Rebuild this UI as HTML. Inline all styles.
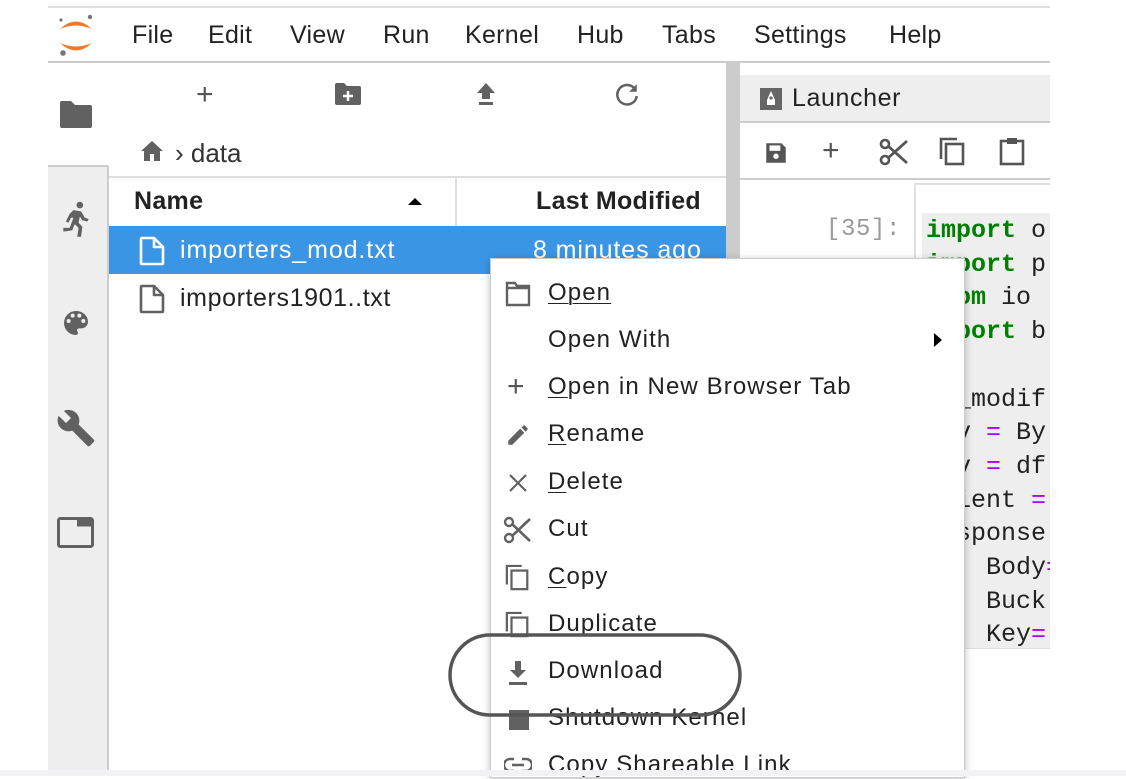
<!DOCTYPE html>
<html><head><meta charset="utf-8"><style>
*{margin:0;padding:0;box-sizing:border-box}
body{width:1126px;height:776px;overflow:hidden;background:#fff;font-family:"Liberation Sans",sans-serif;color:#222;position:relative}
.a{position:absolute}
.menu span{position:absolute;top:21px;font-size:25px;letter-spacing:0.3px;color:#222}
.mono{font-family:"Liberation Mono",monospace;font-size:25px}
.cm{font-size:24px;letter-spacing:1.1px;color:#222}
.fn{font-size:25px;letter-spacing:0.9px}
.u{text-decoration:underline;text-underline-offset:3px;text-decoration-thickness:1px}
</style></head><body>
<div class="a" style="left:48px;top:6px;width:1002px;height:2px;background:#ddd"></div>
<svg class="a" style="left:54px;top:12px" width="44" height="46" viewBox="0 0 44 46">
<path d="M6 17 Q22 2 38 17 Q22 10 6 17Z" fill="#f37726"/>
<path d="M6 31 Q22 46 38 31 Q22 38 6 31Z" fill="#f37726"/>
<circle cx="36" cy="5" r="2.2" fill="#777"/><circle cx="7" cy="8" r="1.6" fill="#777"/><circle cx="9" cy="41" r="2.8" fill="#777"/>
</svg>
<div class="menu">
<span style="left:132px">File</span><span style="left:208px">Edit</span><span style="left:290px">View</span><span style="left:383px">Run</span><span style="left:465px">Kernel</span><span style="left:577px">Hub</span><span style="left:662px">Tabs</span><span style="left:754px">Settings</span><span style="left:889px">Help</span>
</div>
<div class="a" style="left:48px;top:61px;width:1002px;height:2px;background:#ccc"></div>
<div class="a" style="left:48px;top:166px;width:60px;height:604px;background:#eee"></div>
<div class="a" style="left:107px;top:166px;width:2px;height:604px;background:#ccc"></div>
<div class="a" style="left:48px;top:165px;width:60px;height:2px;background:#ccc"></div>
<svg class="a" style="left:58px;top:100px" width="36" height="30" viewBox="0 0 36 30"><path d="M2 3 Q2 1 4 1 H13 L17 5 H32 Q34 5 34 7 V26 Q34 28 32 28 H4 Q2 28 2 26Z" fill="#616161"/></svg>
<svg class="a" style="left:60px;top:200px" width="32" height="38" viewBox="0 0 24 30"><circle cx="15" cy="4" r="2.6" fill="#616161"/><path d="M10 8 L16 9 L19 14 L22 15 L21 17 L17 16 L15 13 L14 18 L17 21 L16 29 L13 29 L14 22 L11 19 L9 24 L2 25 L2 22 L7 22 L10 14 L8 14 L6 18 L4 17 L7 11Z" fill="#616161"/></svg>
<svg class="a" style="left:60px;top:307px" width="32" height="32" viewBox="0 0 24 24"><path d="M12 3a9 9 0 0 0 0 18c.8 0 1.5-.7 1.5-1.5 0-.4-.1-.7-.4-1-.2-.3-.4-.6-.4-1 0-.8.7-1.5 1.5-1.5H16a5 5 0 0 0 5-5c0-4.4-4-8-9-8zM6.5 12a1.5 1.5 0 1 1 0-3 1.5 1.5 0 0 1 0 3zm3-4a1.5 1.5 0 1 1 0-3 1.5 1.5 0 0 1 0 3zm5 0a1.5 1.5 0 1 1 0-3 1.5 1.5 0 0 1 0 3zm3 4a1.5 1.5 0 1 1 0-3 1.5 1.5 0 0 1 0 3z" fill="#616161"/></svg>
<svg class="a" style="left:56px;top:408px" width="40" height="40" viewBox="0 0 24 24"><path d="M22.7 19l-9.1-9.1c.9-2.3.4-5-1.5-6.9-2-2-5-2.4-7.4-1.3L9 6 6 9 1.6 4.7C.4 7.1.9 10.1 2.9 12.1c1.9 1.9 4.6 2.4 6.9 1.5l9.1 9.1c.4.4 1 .4 1.4 0l2.3-2.3c.5-.4.5-1.1.1-1.4z" fill="#616161"/></svg>
<svg class="a" style="left:57px;top:517px" width="38" height="32" viewBox="0 0 38 32"><rect x="1.5" y="1.5" width="34" height="28" rx="2" fill="none" stroke="#616161" stroke-width="3"/><rect x="20" y="1.5" width="16" height="8" fill="#616161"/></svg>
<div class="a" style="left:196px;top:78px;font-size:30px;color:#555;font-weight:300">+</div>
<svg class="a" style="left:334px;top:82px" width="28" height="24" viewBox="0 0 28 24"><path d="M1 3 Q1 1 3 1 H10 L13 4 H25 Q27 4 27 6 V21 Q27 23 25 23 H3 Q1 23 1 21Z" fill="#616161"/><path d="M14 9V19M9 14H19" stroke="#fff" stroke-width="2.5"/></svg>
<svg class="a" style="left:476px;top:82px" width="20" height="24" viewBox="0 0 20 24"><path d="M10 1 L19 11 H14 V17 H6 V11 H1Z M3 20 H17 V23 H3Z" fill="#616161"/></svg>
<svg class="a" style="left:614px;top:82px" width="26" height="26" viewBox="0 0 24 24"><path d="M19 6 A9 9 0 1 0 21 13" fill="none" stroke="#616161" stroke-width="2.3"/><path d="M21 2 V9 H14Z" fill="#616161"/></svg>
<svg class="a" style="left:140px;top:140px" width="24" height="22" viewBox="0 0 24 22"><path d="M12 1 L23 11 H20 V21 H14 V14 H10 V21 H4 V11 H1Z" fill="#616161"/></svg>
<div class="a" style="left:175px;top:138px;font-size:26px;color:#333">› data</div>
<div class="a" style="left:109px;top:176px;width:617px;height:2px;background:#ddd"></div>
<div class="a" style="left:455px;top:178px;width:2px;height:48px;background:#e0e0e0"></div>
<div class="a" style="left:134px;top:187px;font-size:25px;letter-spacing:0.3px;font-weight:bold;color:#222">Name</div>
<div class="a" style="left:408px;top:198px;width:0;height:0;border-left:7px solid transparent;border-right:7px solid transparent;border-bottom:7px solid #000"></div>
<div class="a" style="left:536px;top:187px;font-size:25px;letter-spacing:0.3px;font-weight:bold;color:#222">Last Modified</div>
<div class="a" style="left:109px;top:226px;width:617px;height:48px;background:#3a96e4"></div>
<svg class="a" style="left:139px;top:236px" width="26" height="30" viewBox="0 0 26 30"><path d="M2 3 Q2 2 3 2 H15 L24 11 V27 Q24 28 23 28 H3 Q2 28 2 27Z M15 2 V11 H24" fill="none" stroke="#fff" stroke-width="2.6" stroke-linejoin="round"/></svg>
<div class="a fn" style="left:180px;top:236px;color:#fff">importers_mod.txt</div>
<div class="a fn" style="left:533px;top:236px;color:#fff">8 minutes ago</div>
<svg class="a" style="left:139px;top:284px" width="26" height="30" viewBox="0 0 26 30"><path d="M2 3 Q2 2 3 2 H15 L24 11 V27 Q24 28 23 28 H3 Q2 28 2 27Z M15 2 V11 H24" fill="none" stroke="#616161" stroke-width="2.6" stroke-linejoin="round"/></svg>
<div class="a fn" style="left:180px;top:284px;color:#222;letter-spacing:0.6px">importers1901..txt</div>
<div class="a" style="left:726px;top:63px;width:14px;height:707px;background:#ccc"></div>
<div class="a" style="left:740px;top:75px;width:310px;height:48px;background:#eee;border-bottom:2px solid #ccc"></div>
<svg class="a" style="left:760px;top:88px" width="22" height="22" viewBox="0 0 22 22"><rect width="22" height="22" fill="#666"/><path d="M11 3 L15 12 L15 17 L7 17 L7 12Z" fill="#fff"/><circle cx="11" cy="10" r="1.6" fill="#666"/></svg>
<div class="a" style="left:792px;top:84px;font-size:25px;letter-spacing:0.6px;color:#222">Launcher</div>
<div class="a" style="left:740px;top:178px;width:310px;height:2px;background:#ccc"></div>
<svg class="a" style="left:763px;top:140px" width="26" height="26" viewBox="0 0 24 24"><path d="M3 3 H17 L21 7 V21 H3Z" fill="#555"/><rect x="6" y="5" width="10" height="5" fill="#fff"/><circle cx="12" cy="15" r="2.5" fill="#fff"/></svg>
<div class="a" style="left:822px;top:134px;font-size:30px;color:#555;font-weight:300">+</div>
<svg class="a" style="left:879px;top:138px" width="30" height="28" viewBox="0 0 30 28"><circle cx="6" cy="6" r="4" fill="none" stroke="#555" stroke-width="2.6"/><circle cx="6" cy="22" r="4" fill="none" stroke="#555" stroke-width="2.6"/><path d="M9 8 L28 25 M9 20 L28 3" stroke="#555" stroke-width="2.8"/></svg>
<svg class="a" style="left:939px;top:137px" width="28" height="30" viewBox="0 0 28 30"><path d="M2 22 V2 H18" fill="none" stroke="#555" stroke-width="2.6"/><rect x="7" y="7" width="17" height="20" fill="none" stroke="#555" stroke-width="2.6"/></svg>
<svg class="a" style="left:999px;top:136px" width="28" height="30" viewBox="0 0 28 30"><rect x="2" y="5" width="22" height="23" fill="none" stroke="#555" stroke-width="2.6"/><rect x="8" y="2" width="10" height="6" fill="#555"/></svg>
<div class="a" style="left:914px;top:183px;width:136px;height:466px;border:2px solid #e0e0e0;border-right:none"></div>
<div class="a" style="left:922px;top:213px;width:128px;height:435px;background:#eee"></div>
<div class="a mono" style="left:826px;top:216px;color:#999;font-size:24px;letter-spacing:0.6px">[35]:</div>
<div class="a" style="left:922px;top:213px;width:128px;height:435px;overflow:hidden">
<div class="mono" style="position:absolute;left:4px;top:1px;line-height:33.7px;white-space:pre;color:#222"><span style="color:#008000;font-weight:bold">import</span> o
<span style="color:#008000;font-weight:bold">import</span> p
<span style="color:#008000;font-weight:bold">from</span> io
<span style="color:#008000;font-weight:bold">import</span> b

df_modif
csv <span style="color:#a0f">=</span> By
csv <span style="color:#a0f">=</span> df
client <span style="color:#a0f">=</span>
response
    Body<span style="color:#a0f">=</span>
    Buck
    Key<span style="color:#a0f">=</span></div></div>
<div class="a" style="left:490px;top:258px;width:475px;height:520px;background:#fff;border:1px solid #ccc;box-shadow:0 2px 8px rgba(0,0,0,.25)"></div>
<svg class="a" style="left:505px;top:281px" width="26" height="26" viewBox="0 0 26 26"><path d="M2 2 H10 L12 5 H24 V24 H2Z M2 7 H24" fill="none" stroke="#616161" stroke-width="2.4"/></svg>
<div class="a cm u" style="left:548px;top:279px">Open</div>
<div class="a cm" style="left:548px;top:326px">Open With</div>
<div class="a" style="left:934px;top:333px;width:0;height:0;border-top:7px solid transparent;border-bottom:7px solid transparent;border-left:8px solid #000"></div>
<div class="a" style="left:507px;top:370px;font-size:30px;color:#555;font-weight:300">+</div>
<div class="a cm" style="left:548px;top:373px"><span class="u">O</span>pen in New Browser Tab</div>
<svg class="a" style="left:505px;top:422px" width="26" height="26" viewBox="0 0 24 24"><path d="M3 17.25V21h3.75L17.8 9.9l-3.75-3.75L3 17.25zM20.7 7c.4-.4.4-1 0-1.4l-2.3-2.3c-.4-.4-1-.4-1.4 0l-1.8 1.8 3.75 3.75L20.7 7z" fill="#616161"/></svg>
<div class="a cm" style="left:548px;top:420px"><span class="u">R</span>ename</div>
<svg class="a" style="left:508px;top:473px" width="20" height="20" viewBox="0 0 20 20"><path d="M2 2L18 18M18 2L2 18" stroke="#616161" stroke-width="2.2"/></svg>
<div class="a cm" style="left:548px;top:468px"><span class="u">D</span>elete</div>
<svg class="a" style="left:503px;top:516px" width="30" height="28" viewBox="0 0 30 28"><circle cx="6" cy="6" r="4" fill="none" stroke="#616161" stroke-width="2.4"/><circle cx="6" cy="22" r="4" fill="none" stroke="#616161" stroke-width="2.4"/><path d="M9 8 L27 25 M9 20 L27 3" stroke="#616161" stroke-width="2.6"/></svg>
<div class="a cm" style="left:548px;top:515px">Cut</div>
<svg class="a" style="left:505px;top:563px" width="26" height="30" viewBox="0 0 28 30"><path d="M2 22 V2 H18" fill="none" stroke="#616161" stroke-width="2.4"/><rect x="7" y="7" width="17" height="20" fill="none" stroke="#616161" stroke-width="2.4"/></svg>
<div class="a cm" style="left:548px;top:563px"><span class="u">C</span>opy</div>
<svg class="a" style="left:505px;top:610px" width="26" height="30" viewBox="0 0 28 30"><path d="M2 22 V2 H18" fill="none" stroke="#616161" stroke-width="2.4"/><rect x="7" y="7" width="17" height="20" fill="none" stroke="#616161" stroke-width="2.4"/></svg>
<div class="a cm" style="left:548px;top:610px">Duplicate</div>
<svg class="a" style="left:507px;top:660px" width="22" height="26" viewBox="0 0 22 26"><path d="M8 1 H14 V10 H19 L11 18 L3 10 H8Z M2 22 H20 V25 H2Z" fill="#616161"/></svg>
<div class="a cm" style="left:548px;top:657px">Download</div>
<div class="a" style="left:509px;top:710px;width:20px;height:20px;background:#616161"></div>
<div class="a cm" style="left:548px;top:704px">Shutdown Kernel</div>
<svg class="a" style="left:504px;top:757px" width="28" height="16" viewBox="0 0 28 16"><path d="M10 2 H6 A6 6 0 0 0 6 14 H10 M18 2 H22 A6 6 0 0 1 22 14 H18 M8 8 H20" fill="none" stroke="#616161" stroke-width="2.4"/></svg>
<div class="a cm" style="left:548px;top:751px">Copy Shareable Link</div>
<svg class="a" style="left:440px;top:625px" width="310" height="100"><rect x="10" y="10" width="290" height="80" rx="40" ry="40" fill="none" stroke="#555" stroke-width="3.5"/></svg>
<div class="a" style="left:0;top:770px;width:1126px;height:6px;background:#f2f2f4"></div>
</body></html>
